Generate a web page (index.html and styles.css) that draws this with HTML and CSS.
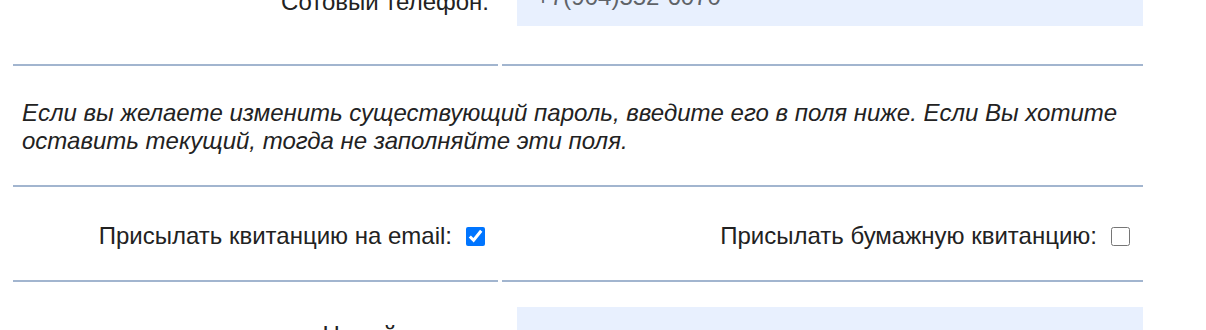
FILE: index.html
```html
<!DOCTYPE html>
<html lang="ru">
<head>
    <meta charset="UTF-8">
    <meta name="viewport" content="width=device-width, initial-scale=1.0">
    <title>Личные данные</title>
    <link rel="stylesheet" href="styles.css">
</head>
<body>
    <form class="profile">
        <label class="cell label label-phone" for="phone">Сотовый телефон:</label>
        <div class="cell field">
            <input type="text" id="phone" class="text-input" value="+7(904)552-6070">
        </div>

        <div class="cell note">
            Если вы желаете изменить существующий пароль, введите его в поля ниже. Если Вы хотите
            оставить текущий, тогда не заполняйте эти поля.
        </div>

        <div class="cell check">
            <label for="sendEmail">Присылать квитанцию на email:</label>
            <input type="checkbox" id="sendEmail" checked>
        </div>
        <div class="cell check">
            <label for="sendPaper">Присылать бумажную квитанцию:</label>
            <input type="checkbox" id="sendPaper">
        </div>

        <label class="cell label label-pass" for="newPass">Новый пароль:</label>
        <div class="cell field">
            <input type="password" id="newPass" class="text-input">
        </div>
    </form>
</body>
</html>
```

FILE: styles.css
```css
body {
    margin: 0;
    background-color: #fff;
    color: #222;
    font-family: "Liberation Sans", Arial, sans-serif;
    font-size: 24px;
}
.profile {
    display: grid;
    grid-template-columns: 485px 641px;
    column-gap: 4px;
    row-gap: 4px;
    margin: -39px 0 0 13px;
}
.cell {
    border-bottom: 2px solid #a2b5cf;
}
.label {
    display: flex;
    align-items: center;
    justify-content: flex-end;
    padding: 24px 9px 35px 0;
}
.label-phone {
    padding-top: 19px;
    padding-bottom: 40px;
}
.label-pass {
    padding-top: 27px;
    padding-bottom: 32px;
}
.field {
    padding: 21px 0 38px 15px;
}
.text-input {
    display: block;
    box-sizing: border-box;
    width: 100%;
    height: 44px;
    padding: 0 19px 14px;
    border: none;
    outline: none;
    background-color: #e8f0fe;
    color: #5f6368;
    font-family: inherit;
    font-size: 24px;
}
.note {
    grid-column: 1 / 3;
    padding: 29px 9px 30px 9px;
    font-size: 24px;
    font-style: italic;
    line-height: 28px;
}
.check {
    display: flex;
    align-items: center;
    justify-content: flex-end;
    gap: 14px;
    padding: 31px 13px 30px 0;
    line-height: 28px;
}
.check input {
    width: 19px;
    height: 19px;
    margin: 0;
}
```
